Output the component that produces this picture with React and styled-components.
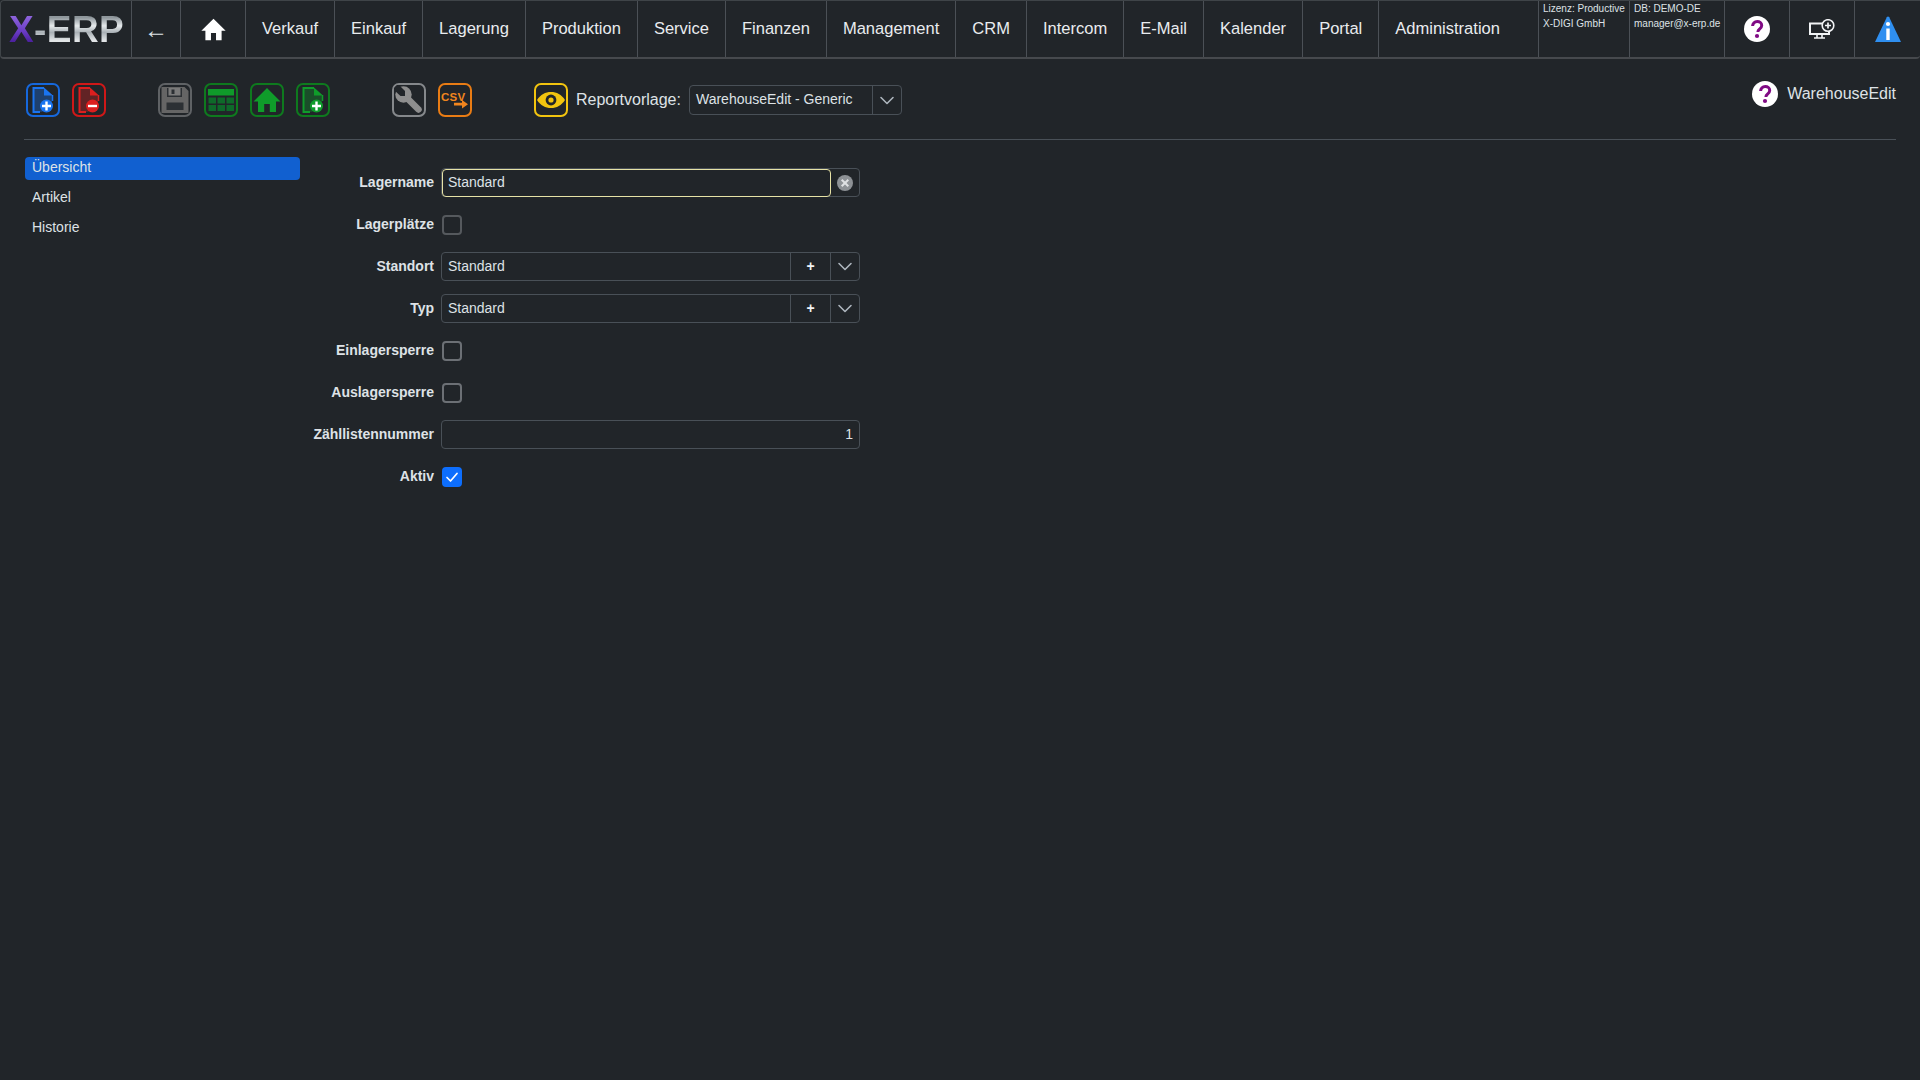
import React from "react";
import styled, { createGlobalStyle } from "styled-components";

const Global = createGlobalStyle`
  html, body { margin: 0; padding: 0; height: 100%; background: #212529; }
  body { font-family: "Liberation Sans", Arial, sans-serif; color: #dee2e6; }
  * { box-sizing: border-box; }
`;

const Page = styled.div`
  width: 1920px;
  height: 1080px;
  background: #212529;
  overflow: hidden;
`;

const Nav = styled.nav`
  display: flex;
  height: 59px;
  border: 1px solid #3f4448;
  border-bottom: 2px solid #46494d;
  border-right: 0;
  border-radius: 4px 0 4px 4px;
`;

const Cell = styled.div`
  display: flex;
  align-items: center;
  justify-content: ${(p) => (p.$center ? "center" : "flex-start")};
  flex: ${(p) => (p.$grow ? "1" : "0 0 auto")};
  width: ${(p) => (p.$w ? `${p.$w}px` : "auto")};
  padding: ${(p) => (p.$w ? "0" : "0 16px")};
  border-right: 1px solid #4b5056;
  font-size: 16.52px;
  color: #e9ecef;
  white-space: nowrap;
  &:last-child { border-right: 0; }
`;

const Logo = styled.div`
  display: flex;
  font-size: 37px;
  font-weight: 700;
  line-height: 1;
  padding-left: 8px;
  letter-spacing: 0.4px;
`;

const LogoX = styled.span`
  background: linear-gradient(180deg, #8d63dc 15%, #6a3cc4 55%, #4a1f9c 85%);
  -webkit-background-clip: text;
  background-clip: text;
  color: transparent;
`;

const LogoRest = styled.span`
  background: linear-gradient(180deg, #8f979c 18%, #e6eaec 40%, #aab1b6 58%, #e2e5e7 80%);
  -webkit-background-clip: text;
  background-clip: text;
  color: transparent;
`;

const Back = styled.span`
  font-size: 24px;
  line-height: 1;
  margin-top: 2px;
  color: #dee2e6;
`;

const Info = styled.div`
  flex: 0 0 auto;
  width: ${(p) => p.$w}px;
  height: 100%;
  padding: 0 0 0 ${(p) => p.$pl}px;
  border-right: 1px solid #4b5056;
  font-size: 10px;
  line-height: 15px;
  color: #dee2e6;
  white-space: nowrap;
`;

const Main = styled.main`
  padding: 0 24px;
`;

const Toolbar = styled.div`
  display: flex;
  align-items: flex-start;
  height: 81px;
  padding-top: 24px;
  border-bottom: 1px solid #495057;
`;

const IconGroup = styled.div`
  display: flex;
  gap: 12px;
  margin-left: ${(p) => p.$ml || 0}px;
`;

const ToolBtn = styled.div`
  width: 34px;
  height: 34px;
  border: 2px solid ${(p) => p.$c};
  border-radius: 7px;
  display: flex;
  align-items: center;
  justify-content: center;
`;

const ReportLabel = styled.span`
  margin-left: 8px;
  margin-right: 8px;
  font-size: 16px;
  line-height: 34px;
  color: #dee2e6;
`;

const ReportSelect = styled.div`
  display: flex;
  width: 213px;
  height: 30px;
  margin-top: 2px;
  border: 1px solid #495057;
  border-radius: 4px;
`;

const SelectValue = styled.div`
  flex: 1;
  padding: 0 6px;
  font-size: 14px;
  line-height: 27px;
  color: #dee2e6;
  white-space: nowrap;
  overflow: hidden;
`;

const Addon = styled.div`
  flex: 0 0 ${(p) => p.$w}px;
  display: flex;
  align-items: center;
  justify-content: center;
  border-left: 1px solid #495057;
  font-size: 14px;
  font-weight: 700;
  color: #f1f3f5;
`;

const HelpLink = styled.div`
  display: flex;
  align-items: center;
  gap: 9px;
  margin-left: auto;
  margin-top: -2px;
  font-size: 16px;
  color: #dee2e6;
`;

const Body = styled.div`
  display: flex;
  align-items: flex-start;
`;

const Side = styled.aside`
  flex: 0 0 275px;
  margin: 17px 0 0 1px;
  display: flex;
  flex-direction: column;
  gap: 7px;
`;

const SideItem = styled.div`
  height: 23px;
  padding: 0 7px;
  border-radius: 4px;
  font-size: 14px;
  line-height: 20px;
  color: #dee2e6;
  background: ${(p) => (p.$active ? "#1160d0" : "transparent")};
`;

const Form = styled.section`
  margin-top: 22px;
`;

const Row = styled.div`
  display: flex;
  align-items: center;
  height: 42px;
`;

const Label = styled.label`
  flex: 0 0 134px;
  padding-bottom: 2px;
  text-align: right;
  font-size: 14px;
  font-weight: 700;
  color: #dee2e6;
  white-space: nowrap;
`;

const Control = styled.div`
  display: flex;
  width: 419px;
  margin: 0 0 2px 7px;
`;

const Group = styled.div`
  display: flex;
  width: 100%;
  height: 29px;
  border: 1px solid #495057;
  border-radius: 4px;
`;

const Value = styled.div`
  flex: 1;
  padding: 0 6px;
  font-size: 14px;
  line-height: 26px;
  color: #dee2e6;
  text-align: ${(p) => (p.$right ? "right" : "left")};
`;

const Focused = styled.div`
  flex: 1;
  height: 28px;
  padding: 0 5px;
  border: 1px solid #e6e2a6;
  border-radius: 4px;
  font-size: 14px;
  line-height: 25px;
  color: #dee2e6;
  background: #212529;
`;

const Clear = styled.div`
  flex: 0 0 28px;
  display: flex;
  align-items: center;
  justify-content: center;
  padding-top: 1px;
`;

const Check = styled.div`
  width: 20px;
  height: 20px;
  margin-left: 8px;
  border-radius: 4px;
  border: 2px solid ${(p) => p.$c || "#6c7075"};
  background: ${(p) => (p.$on ? "#0d6efd" : "transparent")};
  display: flex;
  align-items: center;
  justify-content: center;
`;

const Chevron = () => (
  <svg width="16" height="16" viewBox="0 0 16 16" fill="none" stroke="#adb5bd" strokeWidth="1.6" strokeLinecap="round" strokeLinejoin="round">
    <path d="M2 5.5 8 11.5 14 5.5" />
  </svg>
);

const HelpIcon = () => (
  <svg width="26" height="26" viewBox="0 0 26 26">
    <circle cx="13" cy="13" r="13" fill="#fff" />
    <path d="M8.6 10c0-2.700 2-4.400 4.600-4.400s4.500 1.600 4.500 3.900c0 1.800-1 2.800-2.300 3.700-1.100.8-1.500 1.300-1.500 2.800" fill="none" stroke="#800a84" strokeWidth="3" />
    <circle cx="13" cy="20" r="2.100" fill="#800a84" />
  </svg>
);

const FileGlyph = ({ c, sign }) => (
  <svg width="30" height="30" viewBox="0 0 30 30">
    <path d="M5.500 3.500H16v6.500h8V18L14 27H5.500Z" fill={c} opacity="0.35" />
    <path d="M12 27H5.500V3H16" fill="none" stroke={c} strokeWidth="2" />
    <path d="M16 2.500 25 10.500H16Z" fill={c} />
    <path d="M24.500 10v6" stroke={c} strokeWidth="1.500" />
    <circle cx="18.500" cy="21" r="6.500" fill={c} />
    <path d={sign === "+" ? "M18.500 16.500v9M14 21h9" : "M14 21h9"} stroke="#fff" strokeWidth="2.400" />
  </svg>
);

const Floppy = () => (
  <svg width="30" height="30" viewBox="0 0 30 30">
    <path d="M1.500 2h23l4 4v22h-27Z" fill="#656565" />
    <path d="M7 3h15v9H7Z" fill="#2c3034" />
    <path d="M8.500 3h12v7.500h-12Z" fill="#7a7a7a" />
    <path d="M11.500 4.500h3v4.500h-3Z" fill="#2c3034" />
    <path d="M6.500 17.500h17v7.500h-17Z" fill="#2c3034" />
  </svg>
);

const TableGlyph = () => (
  <svg width="30" height="30" viewBox="0 0 30 30">
    <path d="M2 4h26v6.500H2Z" fill="#0f9a2a" />
    {[12.5, 20].map((y) =>
      [2.5, 11.5, 20.5].map((x) => <rect key={`${x}-${y}`} x={x} y={y} width="7.500" height="6" fill="#0e6a2a" />)
    )}
  </svg>
);

const HomeGlyph = ({ c, size = 30 }) => (
  <svg width={size} height={size} viewBox="0 0 30 30">
    <path d="M15 3 28.500 16.500H24V27H17.800V19H12.200V27H6V16.500H1.500Z" fill={c} />
  </svg>
);

const Wrench = () => (
  <svg width="30" height="30" viewBox="0 0 30 30">
    <circle cx="9.500" cy="9.500" r="8.200" fill="#8e8e8e" />
    <path d="M10 10 24.500 24.500" stroke="#8e8e8e" strokeWidth="6.500" strokeLinecap="round" />
    <path d="M4 -1 11 6 11 11 6.500 11 -1 4Z" fill="#212529" />
  </svg>
);

const CsvGlyph = () => (
  <svg width="30" height="30" viewBox="0 0 30 30">
    <text x="1" y="15.500" fontFamily="Liberation Sans, sans-serif" fontWeight="700" fontSize="11.500" letterSpacing="0.2" fill="#f0851e">CSV</text>
    <path d="M14 17.800h8V15l6 4.200-6 4.200v-2.800h-8Z" fill="#f0851e" />
  </svg>
);

const EyeGlyph = () => (
  <svg width="30" height="30" viewBox="0 0 30 30">
    <path d="M1 15c3.600-5.500 8.300-8 14-8s10.400 2.500 14 8c-3.600 5.500-8.300 8-14 8S4.600 20.500 1 15Z" fill="#f2c40f" />
    <circle cx="15" cy="15" r="5.400" fill="#212529" />
    <circle cx="15" cy="15" r="2.600" fill="#f2c40f" />
  </svg>
);

const Monitor = () => (
  <svg width="26" height="20" viewBox="0 0 26 20" fill="none" stroke="#f1f3f5">
    <path d="M1 4.500h19v10.500H1Z" strokeWidth="2" />
    <path d="M8 15.500v3M13 15.500v3M5 19h11" strokeWidth="1.600" />
    <circle cx="19" cy="6.500" r="5.800" fill="#212529" strokeWidth="1.600" />
    <path d="M19 3.500v6M16 6.500h6" strokeWidth="1.700" />
  </svg>
);

const InfoTriangle = () => (
  <svg width="26" height="26" viewBox="0 0 26 26">
    <path d="M11.800 1.200C12.300.3 13.700.3 14.200 1.200L26 26H0Z" fill="#2f8ff0" />
    <circle cx="13" cy="8" r="2.100" fill="#fff" />
    <rect x="11.300" y="12.500" width="3.400" height="11.500" fill="#fff" />
  </svg>
);

const ClearIcon = () => (
  <svg width="16" height="16" viewBox="0 0 16 16">
    <circle cx="8" cy="8" r="8" fill="#8d9195" />
    <path d="M4.700 4.700 11.300 11.300M11.300 4.700 4.700 11.300" stroke="#dfe1e3" strokeWidth="2" />
  </svg>
);

const Tick = () => (
  <svg width="14" height="14" viewBox="0 0 14 14" fill="none" stroke="#fff" strokeWidth="1.700" strokeLinecap="round" strokeLinejoin="round">
    <path d="M2 7.500 5.500 11 12 3.500" />
  </svg>
);

const menu = ["Verkauf", "Einkauf", "Lagerung", "Produktion", "Service", "Finanzen",
  "Management", "CRM", "Intercom", "E-Mail", "Kalender", "Portal"];

export default function App() {
  return (
    <Page>
      <Global />
      <Nav>
        <Cell $w={131}>
          <Logo>
            <LogoX>X</LogoX>
            <LogoRest>-ERP</LogoRest>
          </Logo>
        </Cell>
        <Cell $w={49} $center><Back>←</Back></Cell>
        <Cell $w={65} $center><HomeGlyph c="#fff" size={27} /></Cell>
        {menu.map((t) => <Cell key={t}>{t}</Cell>)}
        <Cell $grow>Administration</Cell>
        <Info $w={91} $pl={4}>Lizenz: Productive<br />X-DIGI GmbH</Info>
        <Info $w={95} $pl={4}>DB: DEMO-DE<br />manager@x-erp.de</Info>
        <Cell $w={65} $center><HelpIcon /></Cell>
        <Cell $w={65} $center><Monitor /></Cell>
        <Cell $w={65} $center><InfoTriangle /></Cell>
      </Nav>
      <Main>
        <Toolbar>
          <IconGroup $ml={2}>
            <ToolBtn $c="#1668dc"><FileGlyph c="#1a74f0" sign="+" /></ToolBtn>
            <ToolBtn $c="#d01818"><FileGlyph c="#dc1f1f" sign="-" /></ToolBtn>
          </IconGroup>
          <IconGroup $ml={52}>
            <ToolBtn $c="#5f6265"><Floppy /></ToolBtn>
            <ToolBtn $c="#0e7a1e"><TableGlyph /></ToolBtn>
            <ToolBtn $c="#0e7a1e"><HomeGlyph c="#0f9c2a" /></ToolBtn>
            <ToolBtn $c="#0e7a1e"><FileGlyph c="#0f9c2a" sign="+" /></ToolBtn>
          </IconGroup>
          <IconGroup $ml={62}>
            <ToolBtn $c="#85888b"><Wrench /></ToolBtn>
            <ToolBtn $c="#e97c14"><CsvGlyph /></ToolBtn>
          </IconGroup>
          <IconGroup $ml={62}>
            <ToolBtn $c="#f2c40f"><EyeGlyph /></ToolBtn>
          </IconGroup>
          <ReportLabel>Reportvorlage:</ReportLabel>
          <ReportSelect>
            <SelectValue>WarehouseEdit - Generic</SelectValue>
            <Addon $w={29}><Chevron /></Addon>
          </ReportSelect>
          <HelpLink><HelpIcon />WarehouseEdit</HelpLink>
        </Toolbar>
        <Body>
          <Side>
            <SideItem $active>Übersicht</SideItem>
            <SideItem>Artikel</SideItem>
            <SideItem>Historie</SideItem>
          </Side>
          <Form>
            <Row>
              <Label>Lagername</Label>
              <Control>
                <Group>
                  <Focused>Standard</Focused>
                  <Clear><ClearIcon /></Clear>
                </Group>
              </Control>
            </Row>
            <Row>
              <Label>Lagerplätze</Label>
              <Check $c="#55595d" />
            </Row>
            <Row>
              <Label>Standort</Label>
              <Control>
                <Group>
                  <Value>Standard</Value>
                  <Addon $w={40}>+</Addon>
                  <Addon $w={29}><Chevron /></Addon>
                </Group>
              </Control>
            </Row>
            <Row>
              <Label>Typ</Label>
              <Control>
                <Group>
                  <Value>Standard</Value>
                  <Addon $w={40}>+</Addon>
                  <Addon $w={29}><Chevron /></Addon>
                </Group>
              </Control>
            </Row>
            <Row>
              <Label>Einlagersperre</Label>
              <Check />
            </Row>
            <Row>
              <Label>Auslagersperre</Label>
              <Check />
            </Row>
            <Row>
              <Label>Zähllistennummer</Label>
              <Control>
                <Group><Value $right>1</Value></Group>
              </Control>
            </Row>
            <Row>
              <Label>Aktiv</Label>
              <Check $on $c="#0d6efd"><Tick /></Check>
            </Row>
          </Form>
        </Body>
      </Main>
    </Page>
  );
}
